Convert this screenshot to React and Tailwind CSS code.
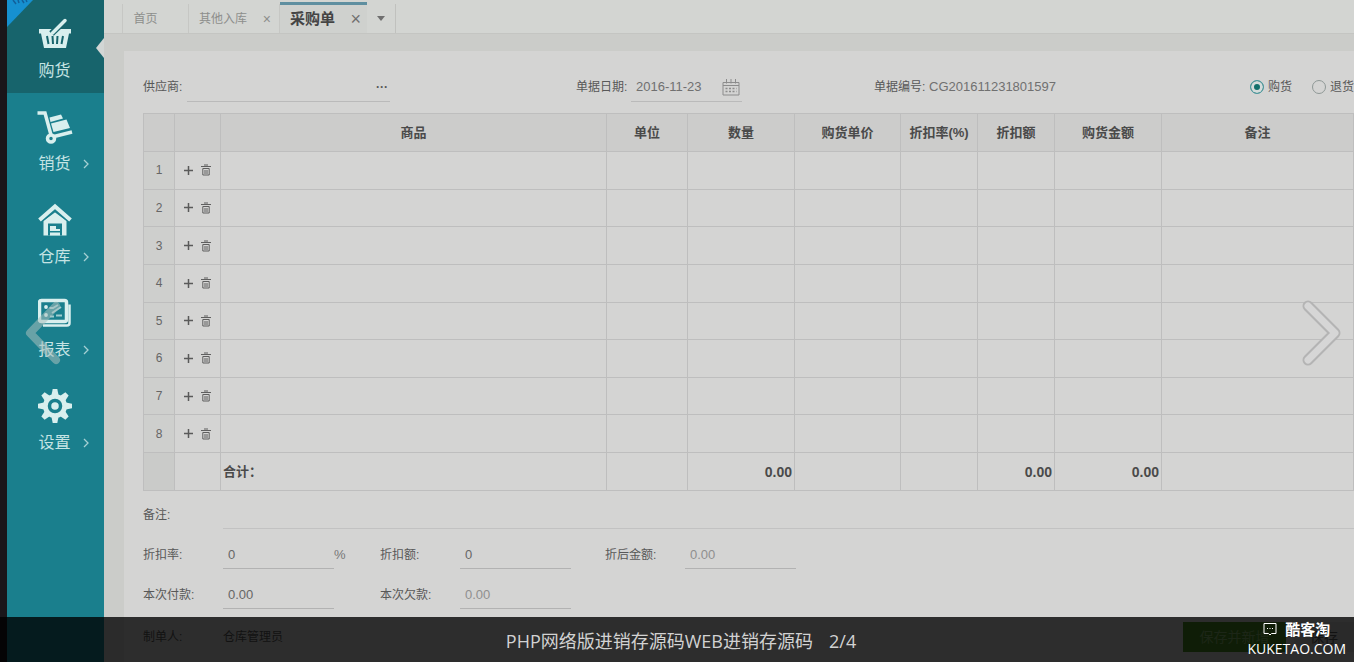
import { useState } from 'react'

const BasketIcon = () => (
  <svg viewBox="0 0 34 32" className="h-8 w-[34px]" fill="none">
    <path d="M1 11h32v4.500h-2L28 30H6L3 15.500H1z" fill="#d9efee" />
    <path d="M9 18l1.500 8M14.500 18l.5 8M19.500 18l-.5 8M25 18l-1.500 8" stroke="#17646c" strokeWidth="2" />
    <path d="M13.500 15.500L25 4.500" stroke="#17646c" strokeWidth="6.500" />
    <path d="M14.500 15L27 2.500" stroke="#d9efee" strokeWidth="3.500" strokeLinecap="round" />
  </svg>
)

const TrolleyIcon = () => (
  <svg viewBox="0 0 36 34" className="h-[34px] w-9" fill="none">
    <path d="M.5 3H8l6 22" stroke="#d9efee" strokeWidth="3.500" />
    <circle cx="14" cy="28.500" r="3.500" stroke="#d9efee" strokeWidth="3.500" />
    <path d="M17 26.500l18-4.500" stroke="#d9efee" strokeWidth="3.500" />
    <path d="M12.500 7.500L24 4.500l2 4-12.500 3.500z" fill="#d9efee" />
    <path d="M14 13.500L29.500 9.500l3.500 8.500-16.500 4z" fill="#d9efee" />
  </svg>
)

const HouseIcon = () => (
  <svg viewBox="0 0 34 34" className="h-[34px] w-[34px]" fill="none">
    <path d="M5.500 18L17 8l11.500 10v14.500h-23z" fill="#d9efee" />
    <path d="M1.500 18.500L17 7l15.500 11.500" stroke="#1a7f8d" strokeWidth="4" />
    <path d="M1.500 17L17 3.500 32.500 17" stroke="#d9efee" strokeWidth="4" />
    <path d="M10 32.500V20.500h14v12" fill="#1a7f8d" />
    <path d="M12 23h6v3h4v2H12zM12 29.500h10v3H12z" fill="#d9efee" />
  </svg>
)

const ReportIcon = () => (
  <svg viewBox="0 0 34 30" className="h-[30px] w-[34px]" fill="none">
    <rect x="1.500" y="2.500" width="27" height="21" rx="2" stroke="#d9efee" strokeWidth="3.500" />
    <path d="M31.500 6.500V25c0 1.500-1 2.500-2.500 2.500H5" stroke="#d9efee" strokeWidth="2.500" />
    <circle cx="8" cy="9" r="1.900" fill="#d9efee" />
    <circle cx="8" cy="17" r="1.900" fill="#d9efee" />
    <path d="M11.500 10H15l5-3M12 18.500h4M18 17.500h6M14 15l9-6" stroke="#9fcdd0" strokeWidth="2" />
  </svg>
)

const GearIcon = () => (
  <svg viewBox="-18 -18 36 36" className="h-9 w-9">
    <circle r="12" fill="#d9efee" />
    {[0, 45, 90, 135, 180, 225, 270, 315].map((a) => (
      <path key={a} d="M-3.500 -11L-2.300 -17H2.300L3.500 -11z" fill="#d9efee" transform={`rotate(${a})`} />
    ))}
    <circle r="5.500" fill="#d9efee" stroke="#1a7f8d" strokeWidth="3.500" />
  </svg>
)

const TrashIcon = () => (
  <svg viewBox="0 0 10 12" className="h-3 w-[10px]" fill="none" stroke="#5f5f5f">
    <path d="M0 2.500h10M3 1h4M1.800 4.500h6.400v6.500H1.800zM4 6v4M6 6v4" />
  </svg>
)

const CalendarIcon = () => (
  <svg viewBox="0 0 18 18" className="h-[18px] w-[18px]" fill="none" stroke="#8c8c8c">
    <path d="M1 4.500h16v12.500H1zM1 7.500h16M4.500 1v4.500M9 1v4.500M13.500 1v4.500" />
    <path d="M3.500 10.500h11M3.500 13.500h11" strokeDasharray="2 1.500" strokeWidth="1.500" />
  </svg>
)

const menu = [
  { name: '购货', icon: BasketIcon, active: true },
  { name: '销货', icon: TrolleyIcon },
  { name: '仓库', icon: HouseIcon },
  { name: '报表', icon: ReportIcon },
  { name: '设置', icon: GearIcon },
]

const columns = [
  { name: '', width: 'w-[31px]' },
  { name: '', width: 'w-[46px]' },
  { name: '商品', width: 'w-[386px]' },
  { name: '单位', width: 'w-[81px]' },
  { name: '数量', width: 'w-[107px]', total: '0.00' },
  { name: '购货单价', width: 'w-[106px]' },
  { name: '折扣率(%)', width: 'w-[77px]' },
  { name: '折扣额', width: 'w-[77px]', total: '0.00' },
  { name: '购货金额', width: 'w-[107px]', total: '0.00' },
  { name: '备注', width: '' },
]

const Sidebar = () => (
  <nav className="relative w-[97px] shrink-0 bg-[#1a7f8d]">
    {menu.map(({ name, icon: Icon, active }) => (
      <a
        key={name}
        href="#"
        className={`relative flex h-[93px] flex-col items-center pr-[2px] text-[#c6e4e4] ${active ? 'bg-[#17646c]' : ''}`}
      >
        <span className="flex h-[58px] items-end justify-center">
          <span className="flex h-12 items-center">
            <Icon />
          </span>
        </span>
        <span className="grid w-full grid-cols-[1fr_auto_1fr] items-center text-base leading-[26px]">
          <span />
          <span>{name}</span>
          {!active && (
            <svg viewBox="0 0 6 10" className="h-[10px] w-[6px] justify-self-center" fill="none" stroke="#a5d0d3">
              <path d="M1 1l4 4-4 4" strokeWidth="1.300" />
            </svg>
          )}
        </span>
        {active && (
          <svg viewBox="0 0 8 20" className="absolute top-[38px] right-0 h-5 w-2">
            <path d="M8 0v20L0 10z" fill="#d2d6d5" />
          </svg>
        )}
      </a>
    ))}
    <svg viewBox="0 0 26 27" className="absolute top-0 left-0 h-[27px] w-[26px]" fill="none">
      <path d="M0 0h26L0 27z" fill="#1690d0" />
      <path d="M6 0l3 4M11 0l1 3M15 0l2 3M19 0l1 2" stroke="#12609a" strokeWidth="1.500" />
    </svg>
  </nav>
)

const Tabs = () => (
  <div className="flex h-[34px] shrink-0 border-b border-[#c4c5c2] bg-[#d3d5d2] pl-[18px] text-xs text-[#8d8e8c]">
    <button className="mt-1 w-[67px] border-x border-[#c6c7c4] pr-5">首页</button>
    <div className="mt-1 flex w-[91px] items-center justify-between border-r border-[#c6c7c4] pr-2 pl-[10px]">
      <button>其他入库</button>
      <button aria-label="关闭其他入库" className="text-sm">×</button>
    </div>
    <div className="mt-[2px] flex w-[87px] items-center justify-between border-t-[3px] border-[#5f8fa0] bg-[#cfd1ce] pr-[6px] pl-[10px]">
      <button className="text-[15px] font-bold text-[#444]">采购单</button>
      <button aria-label="关闭采购单" className="text-lg leading-4 text-[#6f6f6f]">×</button>
    </div>
    <button aria-label="更多标签" className="mt-1 flex w-[29px] items-center justify-center border-r border-[#c0c1be]">
      <svg viewBox="0 0 8 5" className="h-[5px] w-2">
        <path d="M0 0h8L4 5z" fill="#6f6f6f" />
      </svg>
    </button>
  </div>
)

const Field = ({ id, label, value, unit, light }) => (
  <div className="flex items-center">
    <label htmlFor={id} className="w-20 shrink-0">{label}:</label>
    <input
      id={id}
      defaultValue={value}
      className={`h-7 w-[111px] border-b border-[#b2b2b2] px-[5px] text-[13px] outline-none ${light ? 'text-[#8f8f8f]' : 'text-[#666]'}`}
    />
    {unit && <span className="text-[13px] text-[#777]">{unit}</span>}
  </div>
)

const OrderTable = () => (
  <table className="h-[378px] w-full table-fixed border-collapse border border-[#b9b9b9] text-[13px] text-[#4a4a4a]">
    <thead>
      <tr className="h-[38px] bg-[#cccccb]">
        {columns.map((col, i) => (
          <th key={i} className={`border border-[#bebebe] p-0 font-bold whitespace-nowrap ${col.width}`}>
            {col.name}
          </th>
        ))}
      </tr>
    </thead>
    <tbody>
      {[1, 2, 3, 4, 5, 6, 7, 8].map((row) => (
        <tr key={row}>
          <td className="border border-[#bebebe] bg-[#cecfcd] p-0 text-center text-xs text-[#666]">{row}</td>
          <td className="border border-[#bebebe] p-0">
            <div className="flex items-center justify-center gap-2">
              <button type="button" aria-label="新增行">
                <svg viewBox="0 0 9 9" className="h-[9px] w-[9px]" stroke="#5a5a5a" strokeWidth="1.500">
                  <path d="M0 4.500h9M4.500 0v9" />
                </svg>
              </button>
              <button type="button" aria-label="删除行">
                <TrashIcon />
              </button>
            </div>
          </td>
          {columns.slice(2).map((col) => (
            <td key={col.name} className="border border-[#bebebe] p-0" />
          ))}
        </tr>
      ))}
    </tbody>
    <tfoot>
      <tr className="h-[38px] font-bold">
        <td className="border border-[#bebebe] bg-[#cacbc9] p-0" />
        <td className="border border-[#bebebe] p-0" />
        <td className="border border-[#bebebe] px-[2px] py-0">合计：</td>
        {columns.slice(3).map((col) => (
          <td key={col.name} className="border border-[#bebebe] px-[2px] py-0 text-right text-sm">{col.total}</td>
        ))}
      </tr>
    </tfoot>
  </table>
)

const OrderForm = () => {
  const [type, setType] = useState('buy')

  return (
    <form className="flex min-w-0 flex-1 flex-col bg-[#d4d4d3] pl-[19px] text-xs text-[#585858]">
      <div className="flex h-[62px] items-center pt-[10px]">
        <div className="flex w-[433px] shrink-0 items-center">
          <label htmlFor="supplier" className="w-11">供应商:</label>
          <div className="flex h-[30px] w-[203px] items-center border-b border-[#bababa]">
            <input id="supplier" className="min-w-0 flex-1 outline-none" />
            <button type="button" aria-label="选择供应商" className="w-4 font-bold">···</button>
          </div>
        </div>
        <div className="flex w-[298px] shrink-0 items-center">
          <label htmlFor="date" className="w-[55px]">单据日期:</label>
          <div className="flex h-[30px] w-[111px] items-center border-b border-[#bababa] pr-[2px] pl-[5px]">
            <input id="date" defaultValue="2016-11-23" className="min-w-0 flex-1 text-[13px] text-[#707070] outline-none" />
            <CalendarIcon />
          </div>
        </div>
        <div className="flex w-[376px] shrink-0 items-center">
          <span className="w-[55px]">单据编号:</span>
          <span className="text-[13px] text-[#707070]">CG201611231801597</span>
        </div>
        <div className="flex shrink-0 gap-5">
          {[['buy', '购货'], ['back', '退货']].map(([value, text]) => (
            <label key={value} className="flex items-center gap-1">
              <input
                type="radio"
                name="type"
                checked={type === value}
                onChange={() => setType(value)}
                className="h-[14px] w-[14px] appearance-none rounded-full border border-[#8f9896] checked:border-[#4f9aa0] checked:bg-[#12706c] checked:shadow-[inset_0_0_0_3px_#d4dcdb]"
              />
              {text}
            </label>
          ))}
        </div>
      </div>

      <OrderTable />

      <div className="mt-1 flex h-10 items-center">
        <label htmlFor="remark" className="w-20 shrink-0">备注:</label>
        <input id="remark" className="h-7 min-w-0 flex-1 border-b border-[#c2c2c2] outline-none" />
      </div>
      <div className="grid auto-rows-[40px] grid-cols-[237px_225px_1fr]">
        <Field id="rate" label="折扣率" value="0" unit="%" />
        <Field id="discount" label="折扣额" value="0" />
        <Field id="after" label="折后金额" value="0.00" light />
        <Field id="paid" label="本次付款" value="0.00" />
        <Field id="debt" label="本次欠款" value="0.00" light />
      </div>
      <div className="flex h-11 items-center">
        <span className="w-20">制单人:</span>
        <span>仓库管理员</span>
        <div className="ml-auto flex gap-2 text-sm">
          <button type="button" className="h-[30px] w-[103px] bg-[#478a22] text-[#86b46c]">保存并新增</button>
          <button type="button" className="h-[30px] w-[60px] bg-[#c4c4c4] text-[#555]">保存</button>
        </div>
      </div>
    </form>
  )
}

const App = () => (
  <div className="relative flex h-screen overflow-hidden bg-[#1a161a] pl-[7px] font-['Liberation_Sans','Noto_Sans_CJK_SC',sans-serif]">
    <Sidebar />
    <main className="flex min-w-0 flex-1 flex-col">
      <Tabs />
      <div className="flex flex-1 bg-[#cbccc9] pt-[17px] pl-5">
        <OrderForm />
      </div>
    </main>

    <button aria-label="上一张" className="absolute inset-y-0 left-6 pt-1">
      <svg viewBox="0 0 40 68" className="h-[68px] w-10" fill="none" strokeLinecap="round" strokeLinejoin="round">
        <path d="M32 7L6 34l26 27" stroke="#a9bfbe" strokeOpacity=".55" strokeWidth="8" />
      </svg>
    </button>
    <button aria-label="下一张" className="absolute inset-y-0 right-3 pt-1">
      <svg viewBox="0 0 40 68" className="h-[68px] w-10" fill="none" strokeLinecap="round" strokeLinejoin="round">
        <path d="M6 7l27 27L6 61" stroke="#b4b4b4" strokeWidth="11" />
        <path d="M6 7l27 27L6 61" stroke="#d6d6d6" strokeWidth="7" />
      </svg>
    </button>

    <div className="absolute inset-x-0 bottom-0 flex h-[45px] items-center justify-center bg-black/79 pt-[2px] pl-2 font-['Open_Sans','Noto_Sans_CJK_SC',sans-serif] text-lg text-[#d2d2d2]">
      <p className="flex gap-4">
        <span>PHP网络版进销存源码WEB进销存源码</span>
        <span>2/4</span>
      </p>
      <div className="absolute right-2 bottom-[3px] flex flex-col items-center text-sm leading-5 text-white">
        <span className="flex items-center gap-2 text-[15px] font-bold">
          <svg viewBox="0 0 14 14" className="h-[14px] w-[14px]" fill="none" stroke="#fff">
            <path d="M1 1.500h12v10H8.500L7 13l-1.500-1.500H1z" />
            <path d="M4 6.500h1M6.500 6.500h1M9 6.500h1" strokeWidth="1.200" />
          </svg>
          酷客淘
        </span>
        <span>KUKETAO.COM</span>
      </div>
    </div>
  </div>
)

export default App
